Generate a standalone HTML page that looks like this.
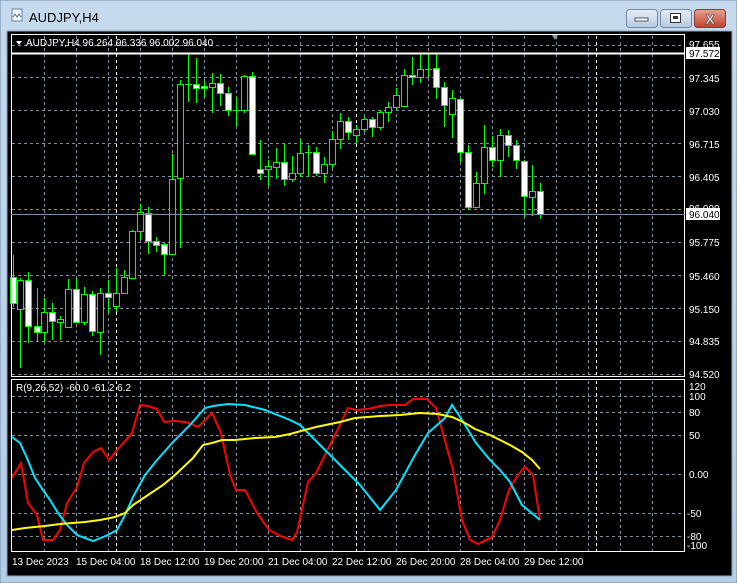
<!DOCTYPE html>
<html><head><meta charset="utf-8"><style>
html,body{margin:0;padding:0;width:737px;height:583px;overflow:hidden;background:#b9d1ea;font-family:"Liberation Sans",sans-serif}
</style></head><body>
<svg width="737" height="583" xmlns="http://www.w3.org/2000/svg" style="position:absolute;left:0;top:0" font-family="Liberation Sans, sans-serif">
<defs>
<linearGradient id="tb" x1="0" y1="0" x2="0" y2="1"><stop offset="0" stop-color="#c7daed"/><stop offset="1" stop-color="#b3cde6"/></linearGradient>
<linearGradient id="bt" x1="0" y1="0" x2="0" y2="1"><stop offset="0" stop-color="#e6eef7"/><stop offset="1" stop-color="#b4c9e0"/></linearGradient>
<linearGradient id="cl" x1="0" y1="0" x2="0" y2="1"><stop offset="0" stop-color="#e5a393"/><stop offset="1" stop-color="#c2402a"/></linearGradient>
</defs>
<rect x="0" y="0" width="737" height="583" fill="url(#tb)" stroke="#6e8aa8"/>
<rect x="7" y="31" width="725" height="545" fill="#000" stroke="#8aa4c0"/>
<!-- title -->
<rect x="12" y="9" width="10" height="12" fill="#fff" stroke="#5a7fb0"/>
<path d="M13 17 l2 -3 2 3 2 -3 2 3" stroke="#3a6ab0" fill="none"/>
<text x="29" y="22" font-size="13" fill="#000">AUDJPY,H4</text>
<rect x="626.5" y="9.5" width="31" height="18" rx="3" fill="url(#bt)" stroke="#7189a6"/>
<rect x="635" y="18" width="13" height="3" fill="#fff" stroke="#334" stroke-width=".8"/>
<rect x="660.5" y="9.5" width="31" height="18" rx="3" fill="url(#bt)" stroke="#7189a6"/>
<rect x="670.5" y="13.5" width="10" height="9" fill="#fff" stroke="#334"/>
<rect x="673" y="16" width="5" height="3" fill="#334"/>
<rect x="694.5" y="9.5" width="31" height="18" rx="3" fill="url(#cl)" stroke="#8a3a2e"/>
<text x="710" y="24" font-size="14" font-weight="bold" fill="#fff" text-anchor="middle" stroke="#444" stroke-width=".6">X</text>
<g id="g"></g>
<!-- chart frames -->
<rect x="11.5" y="34.5" width="673" height="342" fill="none" stroke="#fff"/>
<line x1="11" y1="53.5" x2="685" y2="53.5" stroke="#fff" stroke-width="2"/>
<line x1="11" y1="214.5" x2="685" y2="214.5" stroke="#7f8fa0"/>
<rect x="11.5" y="379.5" width="673" height="172" fill="none" stroke="#fff"/>
<path d="M552 35 l6 0 -3 5z" fill="#8899aa"/>
<path d="M16 41 l6 0 -3 4z" fill="#fff"/>
<text x="26" y="46" font-size="10" fill="#fff">AUDJPY,H4  96.264 96.336 96.002 96.040</text>
<text x="16" y="391" font-size="10" fill="#fff">R(9,26,52) -60.0 -61.2 6.2</text>
<g font-size="10" fill="#fff">
<text x="689" y="48">97.655</text>
<rect x="686" y="47" width="34" height="12" fill="#fff"/><text x="689" y="57" fill="#000">97.572</text>
<text x="689" y="82">97.345</text><text x="689" y="115">97.030</text><text x="689" y="148">96.715</text>
<text x="689" y="181">96.405</text><text x="689" y="212">96.090</text>
<rect x="686" y="208" width="34" height="12" fill="#fff"/><text x="689" y="218" fill="#000">96.040</text>
<text x="689" y="246">95.775</text><text x="689" y="280">95.460</text><text x="689" y="313">95.150</text>
<text x="689" y="345">94.835</text><text x="689" y="378">94.520</text>
<text x="689" y="390">120</text><text x="689" y="400">100</text><text x="689" y="416">80</text>
<text x="689" y="439">50</text><text x="689" y="478">0.00</text><text x="687" y="517">-50</text>
<text x="687" y="540">-80</text><text x="687" y="549">-100</text>
</g>
<g font-size="10" fill="#fff">
<text x="12" y="565">13 Dec 2023</text><text x="76" y="565">15 Dec 04:00</text><text x="140" y="565">18 Dec 12:00</text>
<text x="204" y="565">19 Dec 20:00</text><text x="268" y="565">21 Dec 04:00</text><text x="332" y="565">22 Dec 12:00</text>
<text x="396" y="565">26 Dec 20:00</text><text x="460" y="565">28 Dec 04:00</text><text x="524" y="565">29 Dec 12:00</text>
</g>
</svg>
<script>
var NS="http://www.w3.org/2000/svg",g=document.getElementById("g"),s="";
function L(x1,y1,x2,y2,c,d){s+='<line x1="'+x1+'" y1="'+y1+'" x2="'+x2+'" y2="'+y2+'" stroke="'+c+'"'+(d?' stroke-dasharray="3 3"':'')+'/>';}
var hy=[45,77,110,143,176,209,242,275,308,341,374];
hy.forEach(function(y){L(12,y+.5,684,y+.5,"#7f8fa0",1)});
[396,412,435,474,513,536].forEach(function(y){L(12,y+.5,684,y+.5,"#7f8fa0",1)});
for(var x=44;x<684;x+=32){if(x==116||x==356||x==596)continue;L(x+.5,36,x+.5,376,"#7f8fa0",1);L(x+.5,381,x+.5,551,"#7f8fa0",1);}
[116,356,596].forEach(function(x){L(x+.5,36,x+.5,376,"#fff",1);L(x+.5,381,x+.5,551,"#fff",1);});
var C=[[13,277,303,255,307,1],[20,280,309,278,368,0],[28,280,326,272,343,1],[37,326,332,288,342,1],[44,312,332,298,342,0],[52,312,321,303,340,1],[60,319,322,316,340,0],[68,289,327,279,328,0],[76,289,322,278,322,1],[84,294,322,287,325,0],[92,294,331,291,336,1],[100,293,332,288,355,0],[108,293,297,280,313,1],[116,293,306,268,312,0],[124,277,293,270,293,0],[132,231,278,230,279,0],[140,212,231,204,240,0],[148,213,241,207,254,1],[156,241,245,237,252,1],[164,244,254,243,275,1],[172,179,254,154,254,0],[180,84,178,80,248,0],[188,84,84,54,102,0],[196,84,88,58,103,1],[204,86,88,81,97,1],[212,83,87,73,113,0],[220,83,93,74,106,1],[228,93,110,87,116,1],[236,110,110,97,126,0],[244,76,110,75,113,0],[252,76,154,72,155,1],[260,169,173,140,180,1],[268,166,169,160,186,0],[276,162,167,148,179,0],[284,162,179,144,186,1],[292,173,179,156,182,0],[300,153,173,139,177,0],[308,152,152,145,177,0],[316,152,173,147,176,1],[324,164,173,157,183,0],[332,139,164,131,168,0],[340,121,139,113,149,0],[348,121,132,117,140,1],[356,129,135,125,143,0],[364,119,129,117,132,0],[372,119,127,117,137,1],[380,112,127,110,130,0],[388,107,112,102,122,0],[396,95,107,88,110,0],[404,75,106,69,106,0],[412,75,77,57,85,1],[420,69,77,53,83,0],[428,69,69,53,77,0],[436,68,87,54,99,1],[444,87,105,82,127,1],[452,98,114,90,138,0],[460,99,152,98,162,1],[468,152,207,145,210,1],[476,183,207,172,208,0],[484,147,183,125,194,0],[492,147,160,136,167,1],[500,135,160,129,177,0],[508,135,145,130,157,1],[516,145,160,140,169,1],[524,161,196,160,217,1],[532,191,197,165,216,0],[540,191,214,183,219,1]];
C.forEach(function(c){var x=c[0];L(x+.5,c[3],x+.5,c[4],"#00ff00");
 if(c[1]==c[2])L(x-3,c[1]+.5,x+4,c[1]+.5,"#00ff00");
 else s+='<rect x="'+(x-2.5)+'" y="'+(c[1]+.5)+'" width="6" height="'+(c[2]-c[1])+'" fill="'+(c[5]?"#fff":"#000")+'" stroke="#00ff00"/>';});
function P(p,c){s+='<polyline points="'+p+'" fill="none" stroke="'+c+'" stroke-width="2"/>';}
P("12,478 21,463 28,503 37,515 43,540 53,540 60,530 67,503 77,487 84,463 93,452 101,448 109,460 117,450 126,440 132,433 140,405 148,406 157,409 164,422 173,421 186,422 198,427 212,413 221,433 230,475 236,490 245,490 257,513 269,530 280,536 292,540 297,532 308,482 316,473 334,437 348,408 356,410 368,409 380,406 390,405 405,405 413,399 427,399 436,408 453,470 462,520 470,540 478,544 492,537 500,520 509,490 518,475 525,467 533,475 540,520","#ff0000");
P("12,437 20,443 27,458 35,478 43,490 50,500 58,513 67,525 77,535 93,541 108,535 117,530 125,515 133,497 145,475 157,460 173,442 190,425 205,408 213,406 228,404 245,405 265,410 290,420 300,425 320,445 340,465 360,485 380,510 396,490 415,455 428,433 445,418 452,405 462,420 476,443 490,460 500,470 510,482 522,505 540,520","#00e5ff");
P("12,530 25,528 45,526 60,524 85,522 100,520 115,517 125,513 133,505 148,495 163,485 175,475 193,458 203,445 212,443 222,440 235,440 255,438 275,437 290,434 316,427 340,422 355,418 380,416 400,415 420,413 438,414 452,417 465,423 475,429 490,435 510,445 522,452 532,460 540,469","#ffff00");
g.innerHTML=s;
</script>
</body></html>
